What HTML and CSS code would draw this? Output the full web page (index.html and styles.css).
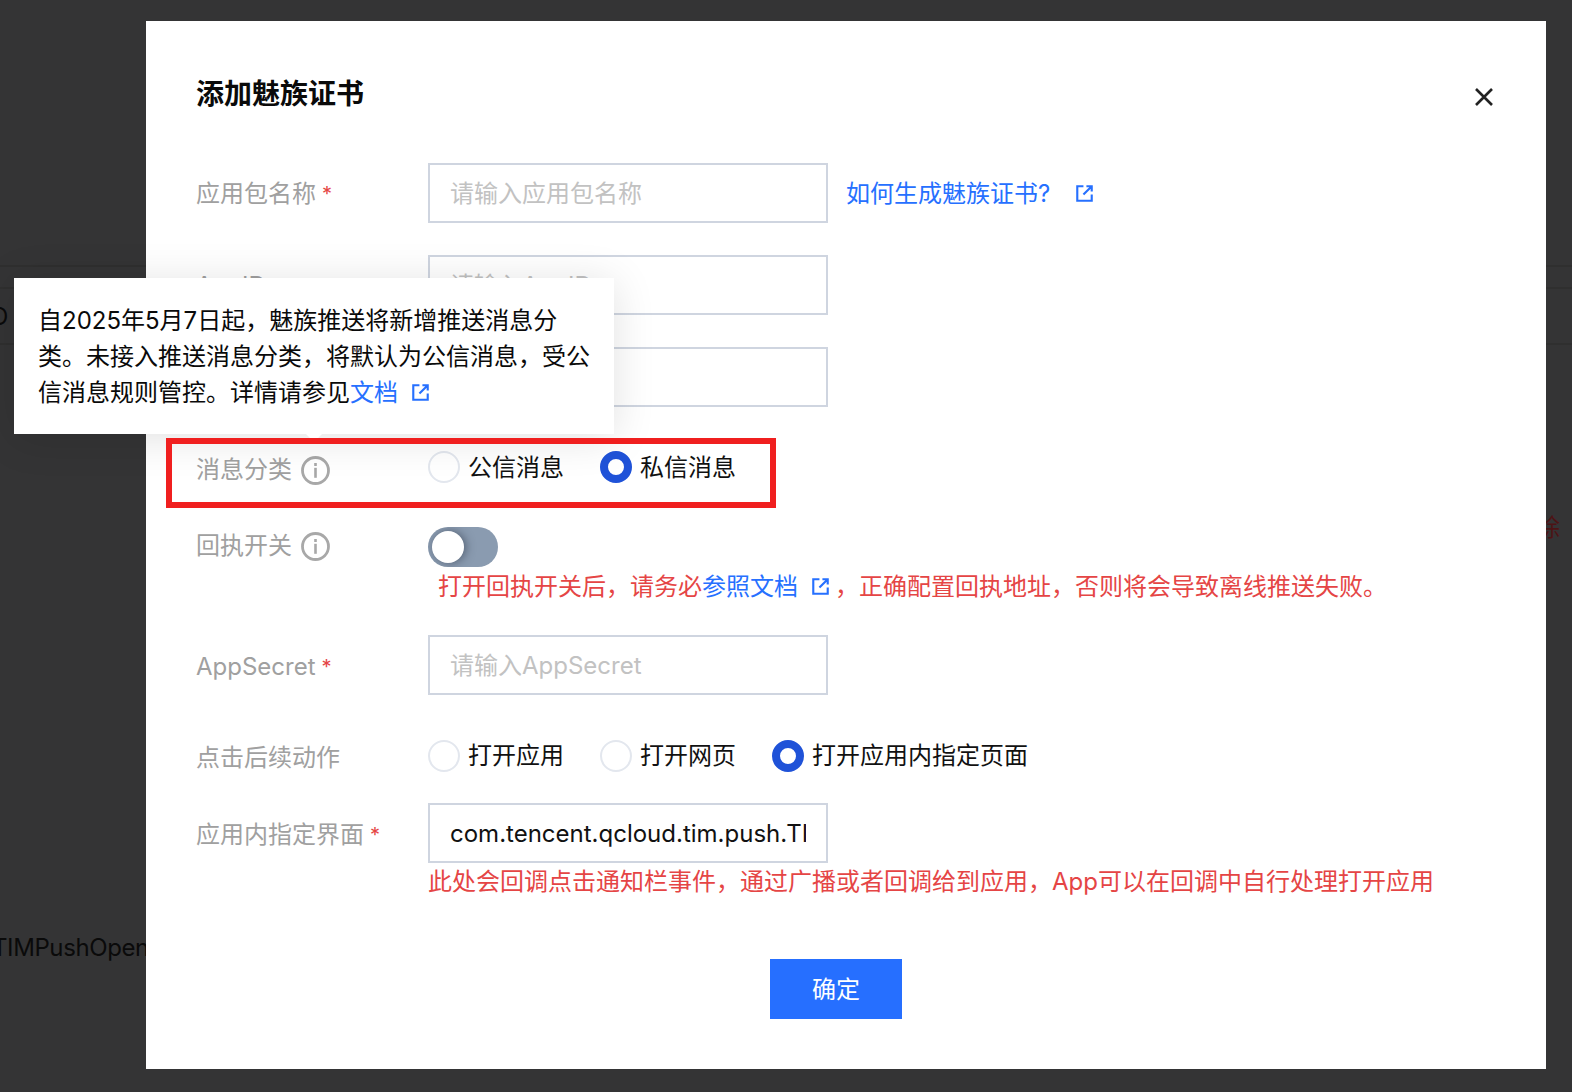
FILE: index.html
```html
<!DOCTYPE html>
<html lang="zh-CN">
<head>
<meta charset="utf-8">
<title>添加魅族证书</title>
<link rel="stylesheet" href="styles.css">
</head>
<body>
<svg class="defs" width="0" height="0" aria-hidden="true">
  <symbol id="ext" viewBox="0 0 16 16"><path d="M7 1.2H1.2v13.6h13.6V9M9.8 1.2h5v5M14.6 1.4L7 9" fill="none" stroke="currentColor" stroke-width="2"/></symbol>
  <symbol id="info" viewBox="0 0 29 29"><circle cx="14.5" cy="14.5" r="13" fill="none" stroke="currentColor" stroke-width="2.8"/><rect x="13.2" y="7" width="2.6" height="3" fill="currentColor"/><rect x="13.2" y="11.8" width="2.6" height="10" fill="currentColor"/></symbol>
</svg>

<div class="backdrop" aria-hidden="true">
  <div class="bg-row bg-row--head"></div>
  <div class="bg-row bg-row--id"><span class="bg-clip">O</span></div>
  <div class="bg-row bg-row--del"><span class="bg-del">除</span></div>
  <div class="bg-row bg-row--act"><span class="bg-act">TIMPushOpen</span></div>
</div>

<main class="dialog">
  <header class="dialog-head">
    <h1 class="dialog-title">添加魅族证书</h1>
    <svg class="close" viewBox="0 0 18 18"><path d="M1 1l16 16M17 1L1 17" fill="none" stroke="currentColor" stroke-width="2.6"/></svg>
  </header>

  <form class="form">
    <div class="row row--after-input">
      <label class="label label--input">应用包名称<span class="req">*</span></label>
      <div class="field field--inline">
        <input class="input" placeholder="请输入应用包名称">
        <a class="link link--help">如何生成魅族证书?<svg class="ext ext--help"><use href="#ext"/></svg></a>
      </div>
    </div>
    <div class="row row--after-input">
      <label class="label label--input">AppID<span class="req">*</span></label>
      <div class="field"><input class="input" placeholder="请输入AppID"></div>
    </div>
    <div class="row row--after-key">
      <label class="label label--input">AppKey<span class="req">*</span></label>
      <div class="field"><input class="input" placeholder="请输入AppKey"></div>
    </div>
    <div class="row row--category">
      <label class="label label--low">消息分类<svg class="info"><use href="#info"/></svg></label>
      <div class="field radios">
        <span class="radio"><i class="dot"></i>公信消息</span>
        <span class="radio"><i class="dot dot--on"></i>私信消息</span>
      </div>
    </div>
    <div class="row row--receipt">
      <label class="label label--low">回执开关<svg class="info"><use href="#info"/></svg></label>
      <div class="field">
        <div class="toggle"><i class="knob"></i></div>
        <p class="note note--receipt">打开回执开关后，请务必<a class="link link--note">参照文档<svg class="ext ext--note"><use href="#ext"/></svg></a>，正确配置回执地址，否则将会导致离线推送失败。</p>
      </div>
    </div>
    <div class="row row--after-secret">
      <label class="label label--input-low">AppSecret<span class="req">*</span></label>
      <div class="field"><input class="input" placeholder="请输入AppSecret"></div>
    </div>
    <div class="row row--after-action">
      <label class="label label--radio">点击后续动作</label>
      <div class="field radios">
        <span class="radio"><i class="dot"></i>打开应用</span>
        <span class="radio"><i class="dot"></i>打开网页</span>
        <span class="radio"><i class="dot dot--on"></i>打开应用内指定页面</span>
      </div>
    </div>
    <div class="row row--last">
      <label class="label label--input-low">应用内指定界面<span class="req">*</span></label>
      <div class="field">
        <input class="input" value="com.tencent.qcloud.tim.push.TIMPushOpenActivity">
        <p class="note">此处会回调点击通知栏事件，通过广播或者回调给到应用，App可以在回调中自行处理打开应用</p>
      </div>
    </div>
    <div class="actions"><button class="btn" type="button">确定</button></div>
  </form>

  <div class="tooltip">
    自2025年5月7日起，魅族推送将新增推送消息分类。未接入推送消息分类，将默认为公信消息，受公信消息规则管控。详情请参见<a class="link">文档<svg class="ext ext--tip"><use href="#ext"/></svg></a>
  </div>
  <div class="highlight"></div>
</main>
</body>
</html>
```
FILE: styles.css
```css
* { box-sizing: border-box; }
html, body { margin: 0; height: 100%; }
body {
  position: relative;
  overflow: hidden;
  height: 1092px;
  padding: 21px 0 0 146px;
  background: #343435;
  font-family: Inter, "Noto Sans CJK SC", sans-serif;
  font-size: 24px;
}
.defs { position: absolute; }

.backdrop {
  position: absolute;
  inset: 0;
  padding-top: 265px;
  color: #0a0a0a;
}
.bg-row { border-top: 2px solid #2f2f2f; display: flex; }
.bg-row--head { height: 22px; }
.bg-row--id { height: 58px; align-items: center; border-bottom: 2px solid #2f2f2f; }
.bg-row--del { height: 200px; border: 0; justify-content: flex-end; padding: 163px 12px 0 0; }
.bg-row--act { border: 0; padding-top: 388px; }
.bg-clip { margin-left: -10px; }
.bg-del { color: #4d1315; }
.bg-act { margin-left: -8px; letter-spacing: -.4px; }

.dialog {
  position: relative;
  width: 1400px;
  height: 1048px;
  padding: 53px 0 0 50px;
  background: #fff;
}
.dialog-head {
  display: flex;
  justify-content: space-between;
  padding-right: 53px;
  height: 40px;
}
.dialog-title {
  margin: 0;
  font-size: 28px;
  line-height: 40px;
  font-weight: 700;
  color: #0a0a0a;
}
.close { width: 18px; height: 18px; margin-top: 14px; color: #222; }

.form { margin-top: 49px; }
.row { display: grid; grid-template-columns: 232px 1fr; }
.row--after-input { margin-bottom: 32px; }
.row--after-key { margin-bottom: 44px; }
.row--category { margin-bottom: 40px; }
.row--category .radio { line-height: 34px; }
.row--receipt { margin-bottom: 30px; }
.row--after-secret { margin-bottom: 45px; }
.row--after-action { margin-bottom: 28px; }
.row--last { margin-bottom: 59px; }

.label {
  display: flex;
  align-items: center;
  height: 34px;
  line-height: 34px;
  color: #a0a0a0;
}
.label--input { margin-top: 14px; }
.label--input-low { margin-top: 15px; }
.label--low { margin-top: 2px; }
.label--radio { margin-top: 1px; }
.req { margin-left: 6px; color: #e54545; font-size: 20px; }
.info { width: 29px; height: 29px; margin-left: 9px; color: #a8a8a8; }

.field--inline { display: flex; align-items: center; }
.input {
  display: block;
  width: 400px;
  height: 60px;
  padding: 0 20px;
  border: 2px solid #cfd5e0;
  border-radius: 0;
  outline: 0;
  font: inherit;
  color: #111;
}
.input::placeholder { color: #c2c2c2; opacity: 1; }

.link { color: #2670ff; }
.link--help { margin: 0 0 4px 18px; }
.link--note { margin-right: 6px; }
.ext { display: inline-block; width: 17px; height: 17px; color: #2670ff; }
.ext--help { margin-left: 26px; }
.ext--note { margin-left: 14px; }
.ext--tip { margin-left: 14px; }

.radios { display: flex; gap: 36px; }
.radio { display: flex; gap: 8px; line-height: 32px; color: #111; }
.dot {
  width: 32px;
  height: 32px;
  border: 2px solid #e3e7ee;
  border-radius: 50%;
  background: #fff;
}
.dot--on { border: 8px solid #1f52d8; }

.toggle {
  width: 70px;
  height: 40px;
  padding: 4px;
  border-radius: 20px;
  background: #8a9bb0;
  overflow: hidden;
}
.knob {
  display: block;
  width: 32px;
  height: 32px;
  border-radius: 50%;
  background: #fff;
  box-shadow: 2px 0 10px rgba(40, 50, 65, .55);
}

.note { margin: 0; line-height: 36px; color: #e54545; }
.note--receipt { margin: 2px 0 0 10px; }
.row--last .note { margin-top: 1px; }

.actions { display: flex; justify-content: center; width: 1280px; }
.btn {
  width: 132px;
  height: 60px;
  padding: 0 0 3px;
  border: 0;
  background: #266fff;
  color: #fff;
  font: inherit;
}

.tooltip {
  position: absolute;
  left: -132px;
  top: 257px;
  width: 600px;
  height: 156px;
  padding: 25px 24px 0;
  background: #fff;
  line-height: 36px;
  color: #0a0a0a;
  box-shadow: 0 4px 40px rgba(0, 0, 0, .12);
}
.tooltip::after {
  content: "";
  position: absolute;
  left: 292px;
  bottom: -8px;
  border: 8px solid transparent;
  border-bottom: 0;
  border-top-color: #fff;
}
.highlight {
  position: absolute;
  left: 20px;
  top: 417px;
  width: 610px;
  height: 70px;
  border: 6px solid #f01f1f;
}
```
